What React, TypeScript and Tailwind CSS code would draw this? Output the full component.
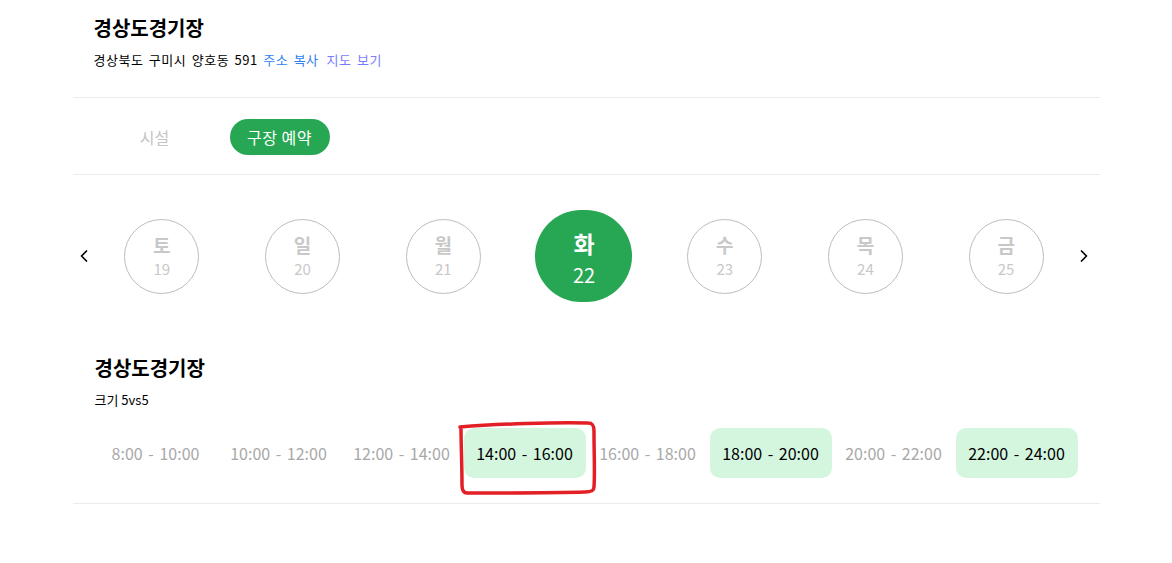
import { ChevronLeft, ChevronRight } from "lucide-react";

const days = [
  { day: "토", date: 19 },
  { day: "일", date: 20 },
  { day: "월", date: 21 },
  { day: "화", date: 22, active: true },
  { day: "수", date: 23 },
  { day: "목", date: 24 },
  { day: "금", date: 25 },
];

const slots = [
  { time: "8:00 - 10:00", open: false },
  { time: "10:00 - 12:00", open: false },
  { time: "12:00 - 14:00", open: false },
  { time: "14:00 - 16:00", open: true },
  { time: "16:00 - 18:00", open: false },
  { time: "18:00 - 20:00", open: true },
  { time: "20:00 - 22:00", open: false },
  { time: "22:00 - 24:00", open: true },
];

export default function App() {
  return (
    <div className="min-h-screen bg-white font-['Noto_Sans_CJK_KR','Noto_Sans',sans-serif] text-black">
      <div className="mx-auto w-[1027px]">
        {/* 구장 정보 */}
        <div className="border-b border-[#ebebeb] pl-[21px] pt-[14px] pb-[28px]">
          <h1 className="text-[20px] font-bold leading-[27px]">경상도경기장</h1>
          <p className="mt-[10px] text-[13px] leading-[18px] tracking-[0.04em] [word-spacing:2px]">
            경상북도 구미시 양호동 591{" "}
            <span className="text-[#2f7ff0]">주소 복사</span>
            <span className="ml-[8px] text-[#7a7cff]">지도 보기</span>
          </p>
        </div>

        {/* 탭 */}
        <div className="flex items-center border-b border-[#ebebeb] pt-[21px] pb-[19px]">
          <button className="ml-[52px] w-[60px] text-[16px] leading-[36px] text-[#c4c4c4]">시설</button>
          <button className="ml-[45px] h-[36px] w-[100px] rounded-full bg-[#27a753] text-[16px] tracking-[0.03em] text-white">
            구장 예약
          </button>
        </div>

        {/* 날짜 선택 */}
        <div className="mt-[35px] flex items-center">
          <div className="w-[19px]">
            <ChevronLeft className="ml-[1px] h-[20px] w-[20px]" strokeWidth={2} />
          </div>
          <div className="grid flex-1 grid-cols-7 items-center">
            {days.map((d) =>
              d.active ? (
                <div key={d.date} className="flex justify-center">
                  <div className="flex h-[92px] w-[97px] flex-col items-center justify-center rounded-full bg-[#27a753] pt-[2px] text-white">
                    <span className="text-[23px] font-bold leading-[28px]">{d.day}</span>
                    <span className="mt-[7px] text-[20px] leading-[22px]">{d.date}</span>
                  </div>
                </div>
              ) : (
                <div key={d.date} className="flex justify-center">
                  <div className="flex h-[75px] w-[75px] flex-col items-center justify-center rounded-full border border-[#bdbdbd] text-[#c8c8c8]">
                    <span className="text-[19px] font-bold leading-[22px]">{d.day}</span>
                    <span className="mt-[4px] text-[15px] leading-[18px]">{d.date}</span>
                  </div>
                </div>
              )
            )}
          </div>
          <div className="w-[23px]">
            <ChevronRight className="-ml-[3px] h-[20px] w-[20px]" strokeWidth={2} />
          </div>
        </div>

        {/* 구장 예약 시간 */}
        <div className="border-b border-[#ebebeb] pl-[22px] pt-[52px] pb-[25px]">
          <h2 className="text-[20px] font-bold leading-[27px]">경상도경기장</h2>
          <p className="mt-[10px] text-[13px] leading-[18px]">크기 5vs5</p>
          <div className="relative mt-[19px] flex gap-px">
            {slots.map((s) => (
              <div
                key={s.time}
                className={
                  s.open
                    ? "flex h-[50px] w-[122px] items-center justify-center rounded-[10px] bg-[#d4f6df] text-[16px] text-black [word-spacing:2px]"
                    : "flex h-[50px] w-[122px] items-center justify-center text-[16px] text-[#a8a8a8] [word-spacing:2px]"
                }
              >
                {s.time}
              </div>
            ))}
            <svg
              className="pointer-events-none absolute left-[362px] top-[-9px]"
              width="144"
              height="78"
              viewBox="0 0 144 78"
              fill="none"
            >
              <path
                d="M3 8 C 40 5, 100 3, 131 4 C 136 4, 137 7, 137 12 C 137 35, 138 55, 137 68 C 137 72, 134 73, 128 73 C 95 74, 50 74, 10 74 C 6 74, 5 71, 5 66 C 5 45, 4 25, 4 9"
                stroke="#e31f26"
                strokeWidth="3.5"
                strokeLinecap="round"
                strokeLinejoin="round"
              />
            </svg>
          </div>
        </div>
      </div>
    </div>
  );
}
